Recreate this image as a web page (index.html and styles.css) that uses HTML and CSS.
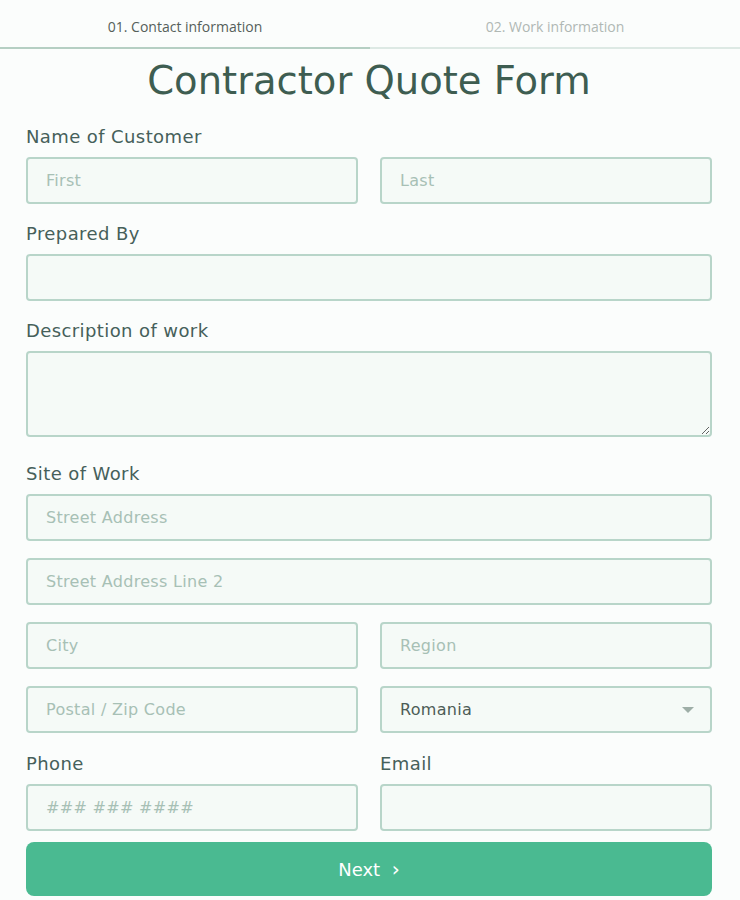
FILE: index.html
```html
<html>
    <head>
        <link rel="stylesheet" href="styles.css">
    </head>
    <body>
        <div class="tabs">
            <div class="tab active">01. Contact information</div>
            <div class="tab">02. Work information</div>
        </div>
        <form class="quote">
            <h1 class="title">Contractor Quote Form</h1>

            <div class="field">
                <label>Name of Customer</label>
                <div class="row">
                    <input type="text" placeholder="First" />
                    <input type="text" placeholder="Last" />
                </div>
            </div>

            <div class="field">
                <label>Prepared By</label>
                <input type="text" />
            </div>

            <div class="field">
                <label>Description of work</label>
                <textarea></textarea>
            </div>

            <div class="field site">
                <label>Site of Work</label>
                <input type="text" placeholder="Street Address" />
                <input type="text" placeholder="Street Address Line 2" />
                <div class="row">
                    <input type="text" placeholder="City" />
                    <input type="text" placeholder="Region" />
                </div>
                <div class="row">
                    <input type="text" placeholder="Postal / Zip Code" />
                    <div class="select">
                        <select>
                            <option>Romania</option>
                        </select>
                    </div>
                </div>
            </div>

            <div class="row">
                <div class="field">
                    <label>Phone</label>
                    <input type="text" placeholder="### ### ####" />
                </div>
                <div class="field">
                    <label>Email</label>
                    <input type="text" />
                </div>
            </div>

            <button type="button" class="next">Next <span class="chev">&rsaquo;</span></button>
        </form>
    </body>
</html>
```

FILE: styles.css
```css
:root {
    --c-bg: #fbfdfc;
    --c-field: #f5faf7;
    --c-border: #b8d5c9;
    --c-text: #46605a;
    --c-title: #3e5d51;
    --c-ph: #a7c0b5;
    --c-btn: #4aba91;
    --f-main: "DejaVu Sans", "Noto Sans", sans-serif;
}

html, body {
    margin: 0;
    padding: 0;
}

body {
    background-color: var(--c-bg);
    font-family: var(--f-main);
    color: var(--c-text);
}

.tabs {
    display: flex;
    height: 49px;
}
.tabs .tab {
    flex: 1;
    text-align: center;
    font-family: "Open Sans", sans-serif;
    font-size: 14px;
    line-height: 42px;
    padding-top: 6px;
    color: #b0b8b4;
    border-bottom: 2px solid #dde9e4;
    box-sizing: border-box;
    height: 49px;
}
.tabs .tab.active {
    color: #555f5a;
    border-bottom-color: #b5cfc3;
}

.quote {
    margin: 0 28px 0 26px;
    display: flex;
    flex-direction: column;
}

.title {
    margin: 6px 0 18px;
    font-weight: normal;
    font-size: 38.5px;
    line-height: 52px;
    text-align: center;
    color: var(--c-title);
}

.field {
    display: flex;
    flex-direction: column;
    margin-bottom: 18px;
}
.field > label {
    font-size: 18px;
    letter-spacing: 0.4px;
    line-height: 24px;
    margin-bottom: 8px;
}
.field.site {
    margin-top: 7px;
    gap: 17px;
}
.field.site > label {
    margin-bottom: -9px;
}

.row {
    display: grid;
    grid-template-columns: 1fr 1fr;
    column-gap: 22px;
}
.row > .field {
    margin-top: 1px;
    margin-bottom: 11px;
}

input, textarea, select {
    box-sizing: border-box;
    width: 100%;
    margin: 0;
    height: 47px;
    padding: 0 18px;
    border: 2px solid var(--c-border);
    border-radius: 4px;
    background-color: var(--c-field);
    font-family: var(--f-main);
    font-size: 16px;
    letter-spacing: 0.3px;
    color: var(--c-text);
    outline: none;
}
textarea {
    height: 86px;
    display: block;
    padding: 10px 18px;
}
input::placeholder {
    color: var(--c-ph);
}

.select {
    position: relative;
}
.select select {
    appearance: none;
    color: #4d5c56;
}
.select::after {
    content: "";
    position: absolute;
    right: 18px;
    top: 21px;
    border-left: 6px solid transparent;
    border-right: 6px solid transparent;
    border-top: 6px solid #9eaea7;
}

.next {
    height: 54px;
    border: 0;
    border-radius: 8px;
    background-color: var(--c-btn);
    color: #ffffff;
    font-family: var(--f-main);
    font-size: 18px;
}
.next .chev {
    font-size: 20px;
    margin-left: 6px;
}
```
